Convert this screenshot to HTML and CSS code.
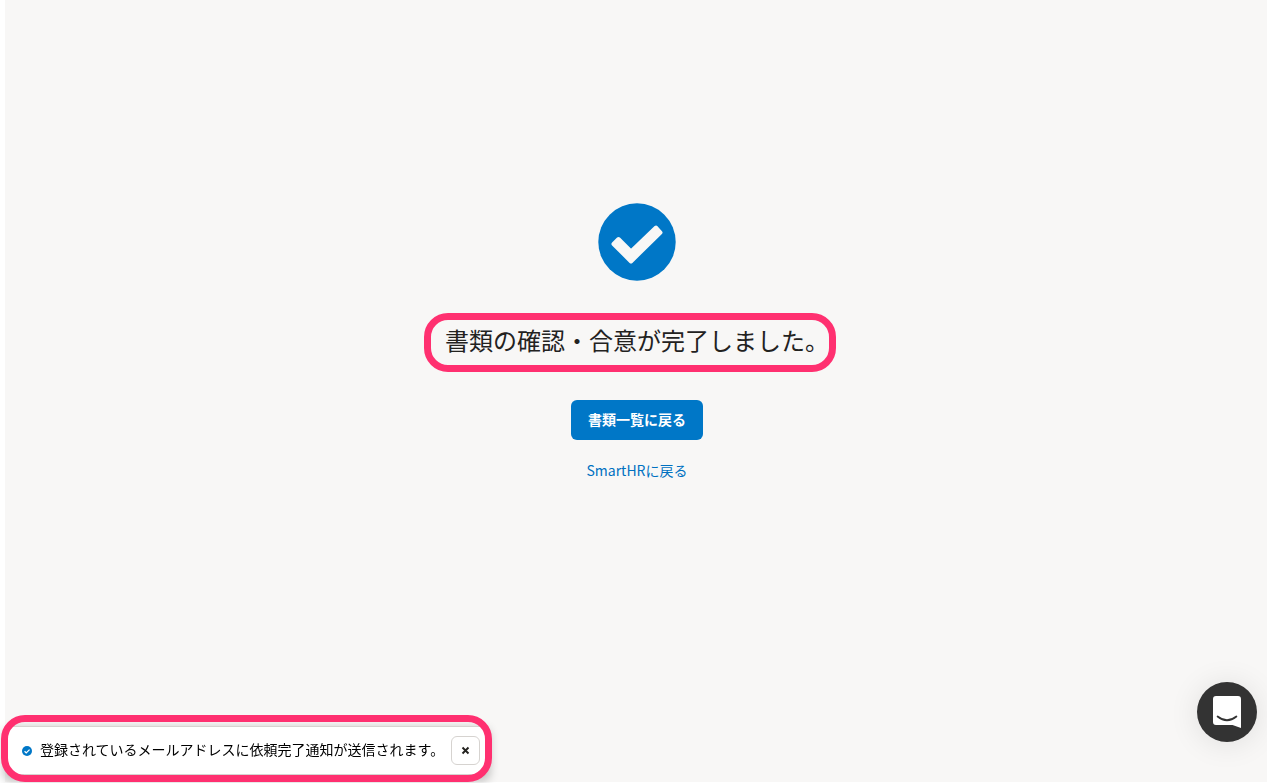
FILE: index.html
```
<!DOCTYPE html>
<html lang="ja">
<head>
<meta charset="utf-8">
<meta name="viewport" content="width=device-width, initial-scale=1">
<title>書類の確認・合意</title>
<link rel="stylesheet" href="styles.css">
</head>
<body>
<main class="page">
  <section class="result">
    <svg class="result-icon" viewBox="0 0 78 78" aria-hidden="true">
      <circle cx="39" cy="39" r="38.7" fill="#0077c7"/>
      <path d="M15.500 41L20.500 36L33 48.500L58 24.500L62.500 29.500L33 58.500Z" fill="#f8f7f6" stroke="#f8f7f6" stroke-width="4" stroke-linejoin="round"/>
    </svg>
    <h1 class="result-title">書類の確認・合意が完了しました。<span class="marker marker-title"></span></h1>
    <button class="primary" type="button">書類一覧に戻る</button>
    <a class="back" href="#">SmartHRに戻る</a>
  </section>
  <div class="toast" role="status">
    <svg class="toast-icon" viewBox="0 0 78 78" aria-hidden="true">
      <circle cx="39" cy="39" r="39" fill="#0077c7"/>
      <path d="M20 41L33 54L59 28" fill="none" stroke="#fff" stroke-width="10"/>
    </svg>
    <p class="toast-text">登録されているメールアドレスに依頼完了通知が送信されます。</p>
    <button class="close" type="button" aria-label="閉じる">
      <svg viewBox="0 0 9 9" width="9" height="9" aria-hidden="true"><path d="M1.500 1.500L7.500 7.500M7.500 1.500L1.500 7.500" stroke="#23221f" stroke-width="1.900"/></svg>
    </button>
    <span class="marker marker-toast"></span>
  </div>
  <button class="chat" type="button" aria-label="チャット">
    <svg viewBox="0 0 28 32" width="28" height="32" aria-hidden="true">
      <path d="M3 0H25Q28 0 28 3V32L19.500 29H3Q0 29 0 26V3Q0 0 3 0Z" fill="#fff"/>
      <path d="M4.600 20.500Q14 28 23.400 20.500" fill="none" stroke="#333" stroke-width="1.800" stroke-linecap="round"/>
    </svg>
  </button>
</main>
</body>
</html>
```
FILE: styles.css
```
* { box-sizing: border-box; }

body {
  margin: 0;
  padding: 0 0 1px 5px;
  height: 100vh;
  background: #fff;
  color: #23221f;
  font-family: "Noto Sans CJK JP", sans-serif;
  font-size: 14px;
  line-height: 20px;
  overflow: hidden;
}

.page {
  height: 100%;
  background: #f8f7f6;
}

.result {
  display: flex;
  flex-direction: column;
  align-items: center;
  padding: 203px 0 0 2px;
}

.result-icon {
  width: 78px;
  height: 78px;
}

.result-title {
  position: relative;
  margin: 41px 0 0;
  font-size: 24px;
  font-weight: 400;
  line-height: 36px;
}

.marker {
  position: absolute;
  border: 7px solid #ff3070;
  pointer-events: none;
}

.marker-title {
  inset: -9px -7px -14px -21px;
  border-radius: 24px;
}

.primary {
  margin-top: 42px;
  height: 40px;
  padding: 0 17px 2px;
  border: 0;
  border-radius: 6px;
  background: #0077c7;
  color: #fff;
  font: inherit;
  font-weight: 700;
}

.back {
  margin-top: 20px;
  color: #0071c1;
  text-decoration: none;
}

.toast {
  position: fixed;
  left: 5px;
  bottom: 8px;
  display: flex;
  align-items: center;
  height: 49px;
  padding: 0 7px 0 17px;
  border: 1px solid #d6d3d0;
  border-left: 0;
  border-radius: 6px;
  background: #fff;
  box-shadow: 0 4px 10px 2px rgba(0, 0, 0, 0.24);
}

.toast-icon {
  width: 10px;
  height: 10px;
}

.toast-text {
  margin: 0 7px 0 8px;
  padding-bottom: 4px;
  color: #000;
  white-space: nowrap;
}

.close {
  display: grid;
  place-items: center;
  width: 29px;
  height: 29px;
  padding: 0;
  border: 1px solid #d6d3d0;
  border-radius: 6px;
  background: #fff;
}

.marker-toast {
  inset: -12px -5px -8px -4px;
  border-radius: 24px;
}

.chat {
  position: fixed;
  right: 10px;
  bottom: 41px;
  display: grid;
  place-items: center;
  width: 60px;
  height: 60px;
  padding: 0;
  border: 0;
  border-radius: 50%;
  background: #333;
  box-shadow: 0 2px 30px rgba(0, 0, 0, 0.1);
}
```
